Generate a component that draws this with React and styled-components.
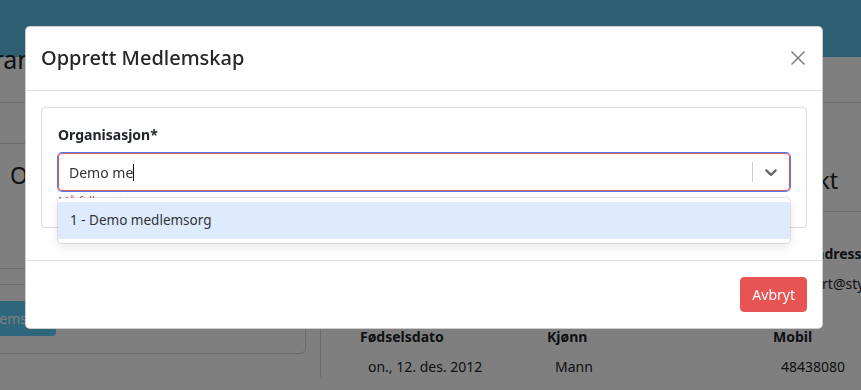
import React from "react";
import styled, { createGlobalStyle } from "styled-components";

const GlobalStyle = createGlobalStyle`
  html, body {
    margin: 0;
    padding: 0;
    background: #ffffff;
    font-family: "Noto Sans", "Open Sans", Arial, sans-serif;
    color: #212529;
    overflow: hidden;
  }
  * {
    box-sizing: border-box;
  }
`;

const Page = styled.div`
  width: 861px;
  height: 390px;
  overflow: hidden;
  background: #ffffff;
`;

const TopBar = styled.div`
  height: 57px;
  background: #5abde5;
`;

const PageTitle = styled.div`
  height: 45px;
  width: 46px;
  display: flex;
  justify-content: flex-end;
  font-size: 25px;
  line-height: 4px;
  white-space: nowrap;
  color: #222;
`;

const TitleRule = styled.div`
  border-bottom: 1px solid #d6d6d6;
`;

const Content = styled.div`
  display: grid;
  grid-template-columns: 320px minmax(0, 1fr);
`;

const LeftCol = styled.div`
  display: flex;
  flex-direction: column;
`;

const LeftTop = styled.div`
  height: 41px;
  border-bottom: 1px solid #d6d6d6;
`;

const SectionTitle = styled.div`
  height: 125px;
  padding: 17px 10px 0;
  font-size: 23px;
  line-height: 28px;
  color: #222;
  white-space: nowrap;
  border-bottom: 1px solid #d6d6d6;
`;

const Strip = styled.div`
  height: 16px;
  border-bottom: 1px solid #d6d6d6;
`;

const InnerCard = styled.div`
  height: 69px;
  margin-right: 14px;
  padding-top: 16px;
  border: 1px solid #d6d6d6;
  border-top: none;
  border-left: none;
  border-radius: 0 0 6px 0;
`;

const TealButton = styled.div`
  width: 56px;
  height: 35px;
  display: flex;
  justify-content: flex-end;
  padding-right: 5px;
  background: #5ccff6;
  color: #fff;
  font-size: 14px;
  line-height: 35px;
  border-radius: 0 4px 4px 0;
  overflow: hidden;
  white-space: nowrap;
`;

const RightCol = styled.div`
  min-width: 0;
  border-left: 1px solid #d6d6d6;
`;

const RightHeader = styled.div`
  height: 109px;
  padding: 63px 23px 0 0;
  text-align: right;
  font-size: 23px;
  line-height: 28px;
  color: #222;
  border-bottom: 1px solid #d6d6d6;
  white-space: nowrap;
`;

const FieldGrid = styled.div`
  display: grid;
  grid-template-columns: 187px 226px 200px;
  padding: 32px 0 0 39px;
  row-gap: 33px;
`;

const Field = styled.div`
  display: flex;
  flex-direction: column;
  gap: 10px;
  white-space: nowrap;
`;

const FieldLabel = styled.div`
  font-size: 14px;
  font-weight: 700;
  line-height: 20px;
`;

const FieldValue = styled.div`
  font-size: 14px;
  line-height: 20px;
  padding-left: 8px;
`;

const Overlay = styled.div`
  position: fixed;
  inset: 0;
  background: rgba(0, 0, 0, 0.5);
  display: flex;
  align-items: flex-start;
  padding: 26px 0 0 25px;
`;

const Modal = styled.div`
  width: 798px;
  background: #fff;
  border: 1px solid rgba(0, 0, 0, 0.2);
  border-radius: 5px;
`;

const ModalHeader = styled.div`
  display: flex;
  align-items: center;
  justify-content: space-between;
  padding: 16px 16px 17px 15px;
  border-bottom: 1px solid #dedede;
`;

const ModalTitle = styled.h5`
  margin: 0;
  font-size: 20px;
  font-weight: 500;
  line-height: 30px;
  color: #262626;
`;

const CloseButton = styled.button`
  border: none;
  background: none;
  padding: 0;
  width: 16px;
  height: 16px;
  display: flex;
  align-items: center;
  justify-content: center;
  cursor: pointer;
`;

const ModalBody = styled.div`
  padding: 16px 15px;
`;

const Card = styled.div`
  border: 1px solid #dcdcdc;
  border-radius: 4px;
  padding: 16px 16px 14px;
  margin-bottom: 16px;
`;

const Label = styled.label`
  display: block;
  font-size: 14px;
  font-weight: 700;
  line-height: 21px;
  margin-bottom: 8px;
`;

const SelectWrap = styled.div`
  position: relative;
`;

const Control = styled.div`
  display: flex;
  align-items: center;
  height: 38px;
  border: 1px solid #e55353;
  border-radius: 4px;
  box-shadow: 0 0 0 1px #4a7ef5;
`;

const ValueBox = styled.div`
  flex: 1;
  padding: 2px 10px;
  font-size: 14px;
  color: #333;
  display: flex;
  align-items: center;
`;

const Caret = styled.span`
  display: inline-block;
  width: 1px;
  height: 17px;
  background: #111;
`;

const Separator = styled.span`
  width: 1px;
  align-self: stretch;
  margin: 8px 0;
  background: #ccc;
`;

const Indicator = styled.div`
  padding: 8px;
  display: flex;
  color: #666;
`;

const ErrorText = styled.div`
  margin-top: 0;
  font-size: 12px;
  line-height: 22px;
  color: #e55353;
`;

const Menu = styled.div`
  position: absolute;
  top: 100%;
  left: 0;
  right: 0;
  z-index: 2;
  margin-top: 7px;
  padding: 4px 0;
  background: #fff;
  border-radius: 4px;
  box-shadow: 0 0 0 1px rgba(0, 0, 0, 0.1), 0 4px 11px rgba(0, 0, 0, 0.1);
`;

const Option = styled.div`
  padding: 8px 12px;
  font-size: 13.5px;
  line-height: 21px;
  color: #333;
  background: ${({ $focused }) => ($focused ? "#deebff" : "transparent")};
`;

const ModalFooter = styled.div`
  display: flex;
  justify-content: flex-end;
  padding: 16px 15px;
  border-top: 1px solid #dedede;
`;

const DangerButton = styled.button`
  border: 1px solid #e85454;
  background: #e85454;
  color: #fff;
  font-family: inherit;
  font-size: 14px;
  line-height: 21px;
  padding: 6px 11px;
  border-radius: 4px;
  cursor: pointer;
`;

const ChevronDown = () => (
  <svg width="20" height="20" viewBox="0 0 20 20" fill="currentColor">
    <path d="M4.516 7.548c0.436-0.446 1.043-0.481 1.576 0l3.908 3.747 3.908-3.747c0.533-0.481 1.141-0.446 1.574 0 0.436 0.445 0.408 1.197 0 1.615-0.406 0.418-4.695 4.502-4.695 4.502-0.217 0.223-0.502 0.335-0.787 0.335s-0.57-0.112-0.789-0.335c0 0-4.287-4.084-4.695-4.502s-0.436-1.17 0-1.615z" />
  </svg>
);

const CloseIcon = () => (
  <svg width="16" height="16" viewBox="0 0 16 16">
    <path d="M1.5 1.5 14.5 14.5M14.5 1.5 1.5 14.5" stroke="#7f7f7f" strokeWidth="1.5" />
  </svg>
);

const App = () => {
  return (
    <>
      <GlobalStyle />
      <Page>
        <TopBar />
        <PageTitle>
          <span>Oversikt medlem Frank</span>
        </PageTitle>
        <TitleRule />
        <Content>
          <LeftCol>
            <LeftTop />
            <SectionTitle>Oversikt</SectionTitle>
            <Strip />
            <InnerCard>
              <TealButton>
                <span>Nytt medlemskap</span>
              </TealButton>
            </InnerCard>
          </LeftCol>
          <RightCol>
            <RightHeader>Kontakt</RightHeader>
            <FieldGrid>
              <Field>
                <FieldLabel>Fornavn</FieldLabel>
                <FieldValue>Demo</FieldValue>
              </Field>
              <Field>
                <FieldLabel>Etternavn</FieldLabel>
                <FieldValue>Medlem</FieldValue>
              </Field>
              <Field>
                <FieldLabel>E-postadresse</FieldLabel>
                <FieldValue>support@styreweb.no</FieldValue>
              </Field>
              <Field>
                <FieldLabel>Fødselsdato</FieldLabel>
                <FieldValue>on., 12. des. 2012</FieldValue>
              </Field>
              <Field>
                <FieldLabel>Kjønn</FieldLabel>
                <FieldValue>Mann</FieldValue>
              </Field>
              <Field>
                <FieldLabel>Mobil</FieldLabel>
                <FieldValue>48438080</FieldValue>
              </Field>
            </FieldGrid>
          </RightCol>
        </Content>
      </Page>
      <Overlay>
        <Modal>
          <ModalHeader>
            <ModalTitle>Opprett Medlemskap</ModalTitle>
            <CloseButton aria-label="Lukk">
              <CloseIcon />
            </CloseButton>
          </ModalHeader>
          <ModalBody>
            <Card>
              <Label>Organisasjon*</Label>
              <SelectWrap>
                <Control>
                  <ValueBox>
                    Demo me
                    <Caret />
                  </ValueBox>
                  <Separator />
                  <Indicator>
                    <ChevronDown />
                  </Indicator>
                </Control>
                <Menu>
                  <Option $focused>1 - Demo medlemsorg</Option>
                </Menu>
              </SelectWrap>
              <ErrorText>Må fylles ut</ErrorText>
            </Card>
          </ModalBody>
          <ModalFooter>
            <DangerButton>Avbryt</DangerButton>
          </ModalFooter>
        </Modal>
      </Overlay>
    </>
  );
};

export default App;
